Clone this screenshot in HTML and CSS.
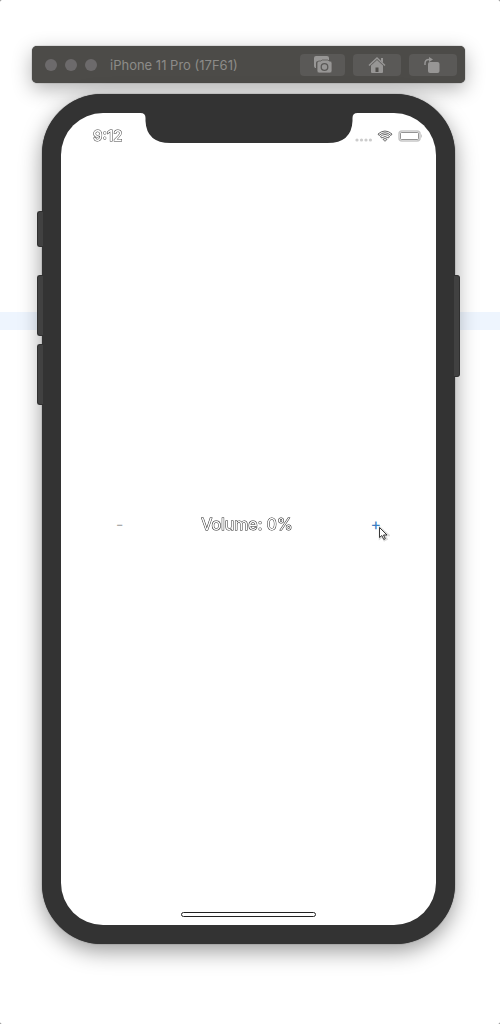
FILE: index.html
```html
<!DOCTYPE html>
<html lang="en">
<head>
<meta charset="utf-8">
<meta name="viewport" content="width=device-width, initial-scale=1">
<title>iPhone 11 Pro (17F61)</title>
<link rel="stylesheet" href="styles.css">
</head>
<body>
<div class="page">
  <div class="selection-band"></div>
  <header class="toolbar">
    <div class="lights"><span class="light"></span><span class="light"></span><span class="light"></span></div>
    <h1 class="title">iPhone 11 Pro (17F61)</h1>
    <div class="actions">
      <button class="tool tool-small" type="button" aria-label="Screenshot">
        <svg width="20" height="20" viewBox="0 0 20 20"><path d="M3 1h11q2 0 2 2v3H5Q3 6 3 8v5H2q-1-1-1-2V3q0-2 2-2z" fill="#979695"/><path d="M6 6h2l1-1h6l1 1h1q2 0 2 2v8q0 2-2 2H6q-2 0-2-2V8q0-2 2-2z" fill="#979695" stroke="#5a5957" stroke-width=".8"/><circle cx="11.500" cy="12" r="3.300" fill="#979695" stroke="#5a5957" stroke-width="1.300"/></svg>
      </button>
      <button class="tool" type="button" aria-label="Home">
        <svg width="20" height="20" viewBox="0 0 20 20"><path d="M2 10.500 10 3l8 7.500" fill="none" stroke="#979695" stroke-width="1.500"/><path d="M14 3h2v5l-2-2z" fill="#979695"/><path d="m10 5 6 5.500V17q0 1-1 1H5q-1 0-1-1v-6.500z" fill="#979695"/><path d="M8.500 12.500h3V17h-3z" fill="#514f4c"/></svg>
      </button>
      <button class="tool" type="button" aria-label="Rotate">
        <svg width="20" height="20" viewBox="0 0 20 20"><rect x="5" y="7" width="11.500" height="11" rx="2" fill="#979695"/><path d="M2 10V8.500q0-4 4-4h1" fill="none" stroke="#979695" stroke-width="1.500"/><path d="m6 2 4 2.500L6 7z" fill="#979695"/></svg>
      </button>
    </div>
  </header>
  <div class="phone">
    <span class="key key-mute"></span>
    <span class="key key-up"></span>
    <span class="key key-down"></span>
    <span class="key key-power"></span>
    <svg class="notch" width="217" height="30" viewBox="0 0 217 30"><path d="M0 0h217q-5 0-5 5v3q-1 22-25 22H30Q6 30 5 8V5q0-5-5-5z" fill="#333"/></svg>
    <main class="screen">
      <div class="status">
        <time class="time outlined">9:12</time>
        <div class="indicators">
          <svg width="17" height="5" viewBox="0 0 17 5" fill="#ccc"><circle cx="2" cy="3" r="1.600"/><circle cx="6.500" cy="3" r="1.600"/><circle cx="11" cy="3" r="1.600"/><circle cx="15.400" cy="3" r="1.600"/></svg>
          <svg width="16" height="12" viewBox="0 0 16 12" fill="none" stroke="#444" stroke-width=".8"><path d="M1 4Q8-2 15 4l-1 1.500Q8 0 2 5.500zM3.500 6.500Q8 2.500 12.500 6.500L11.400 8Q8 5 4.600 8zM6 9.300q2-1.600 4 0l-2 2z"/></svg>
          <svg width="25" height="12" viewBox="0 0 25 12" fill="none"><rect x="1" y="1" width="21" height="10" rx="3" stroke="#c7c7c7" stroke-width="1.500"/><rect x="2.500" y="2.500" width="18" height="7" rx="1" stroke="#777" stroke-width=".8"/><path d="M23 4q2 2 0 4z" fill="#c7c7c7"/></svg>
        </div>
      </div>
      <div class="volume">
        <button class="step step-down" type="button" disabled>-</button>
        <p class="level outlined">Volume: 0%</p>
        <button class="step" type="button">+
          <svg class="cursor" width="12" height="16" viewBox="0 0 12 16"><path d="M2 2v10l2.500-2 2 4 2-1-2-4H10z" fill="#fff" stroke="#ddd" stroke-width="2.500"/><path d="M1.500 1.500v10l2.300-2 2 4 1.500-.8-1.800-3.700H9z" fill="#fff" stroke="#222" stroke-width=".9"/></svg>
        </button>
      </div>
      <div class="home"><span class="home-bar"></span></div>
    </main>
  </div>
</div>
</body>
</html>
```
FILE: styles.css
```css
* { box-sizing: border-box; }
html { background: #777; }
body {
  margin: 0;
  font-family: Inter, "Liberation Sans", sans-serif;
}
.page {
  position: relative;
  display: flex;
  flex-direction: column;
  gap: 11px;
  min-height: 100vh;
  padding: 46px 35px 80px 32px;
  background: #fff;
  border-radius: 2px;
  overflow: hidden;
}
.selection-band {
  position: absolute;
  top: 312px;
  left: 0;
  right: 0;
  height: 18px;
  background: #eef5fe;
}
.toolbar {
  position: relative;
  display: flex;
  align-items: center;
  height: 37px;
  padding: 0 8px 0 13px;
  background: #4c4b48;
  border-radius: 5px;
  box-shadow: 0 0 1px #333, 0 6px 20px rgba(0, 0, 0, .3);
}
.lights { display: flex; gap: 8px; }
.light {
  width: 12px;
  height: 12px;
  border-radius: 50%;
  background: #6c6a6b;
}
.title {
  margin: 0 0 0 13px;
  font-size: 13px;
  line-height: 18px;
  font-weight: 400;
  color: #8c8b89;
  white-space: nowrap;
}
.actions { display: flex; gap: 8px; margin-left: auto; }
.tool {
  display: flex;
  align-items: center;
  justify-content: center;
  width: 48px;
  height: 22px;
  padding: 0;
  border: 0;
  border-radius: 4px;
  background: #5a5957;
}
.tool-small { width: 45px; }
.phone {
  position: relative;
  display: flex;
  flex: 1;
  flex-direction: column;
  margin: 0 10px;
  border: 19px solid #333;
  border-radius: 60px;
  background: #333;
  box-shadow: 0 0 1px #222, 0 7px 22px rgba(0, 0, 0, .4);
}
.key {
  position: absolute;
  left: -24px;
  width: 6px;
  background: #414141;
  border: 1px solid #303030;
  border-right: 0;
  border-radius: 3px 0 0 3px;
}
.key-mute { top: 98px; height: 36px; }
.key-up { top: 162px; height: 61px; }
.key-down { top: 231px; height: 61px; }
.key-power {
  top: 162px;
  left: auto;
  right: -24px;
  height: 102px;
  border: 1px solid #303030;
  border-left: 0;
  border-radius: 0 3px 3px 0;
}
.notch {
  position: absolute;
  top: 0;
  left: 50%;
  transform: translateX(-50%);
}
.screen {
  display: flex;
  flex: 1;
  flex-direction: column;
  border-radius: 42px;
  background: #fff;
}
.status {
  display: flex;
  align-items: center;
  justify-content: space-between;
  height: 44px;
  padding: 2px 13px 0 32px;
}
.outlined {
  color: #fff;
  -webkit-text-stroke: 1px #444;
  paint-order: stroke fill;
  will-change: opacity;
}
.time { font-size: 15px; line-height: 20px; font-weight: 500; }
.indicators { display: flex; align-items: center; gap: 5px; }
.indicators svg:first-child { margin-top: 6px; }
.volume {
  display: flex;
  flex: 1;
  align-items: center;
  justify-content: space-between;
  padding: 0 55px;
}
.level {
  margin: 0;
  font-size: 16px;
  line-height: 22px;
  -webkit-text-stroke-color: #222;
}
.step {
  position: relative;
  padding: 0;
  border: 0;
  background: none;
  font: 400 16px/22px Inter, "Liberation Sans", sans-serif;
  color: #3d7fc4;
}
.step-down { color: #aaa; }
.cursor {
  position: absolute;
  top: 13px;
  left: 8px;
}
.home {
  display: flex;
  align-items: flex-end;
  justify-content: center;
  height: 34px;
  padding-bottom: 8px;
}
.home-bar {
  width: 135px;
  height: 5px;
  border: 1px solid #222;
  border-radius: 3px;
}
```
